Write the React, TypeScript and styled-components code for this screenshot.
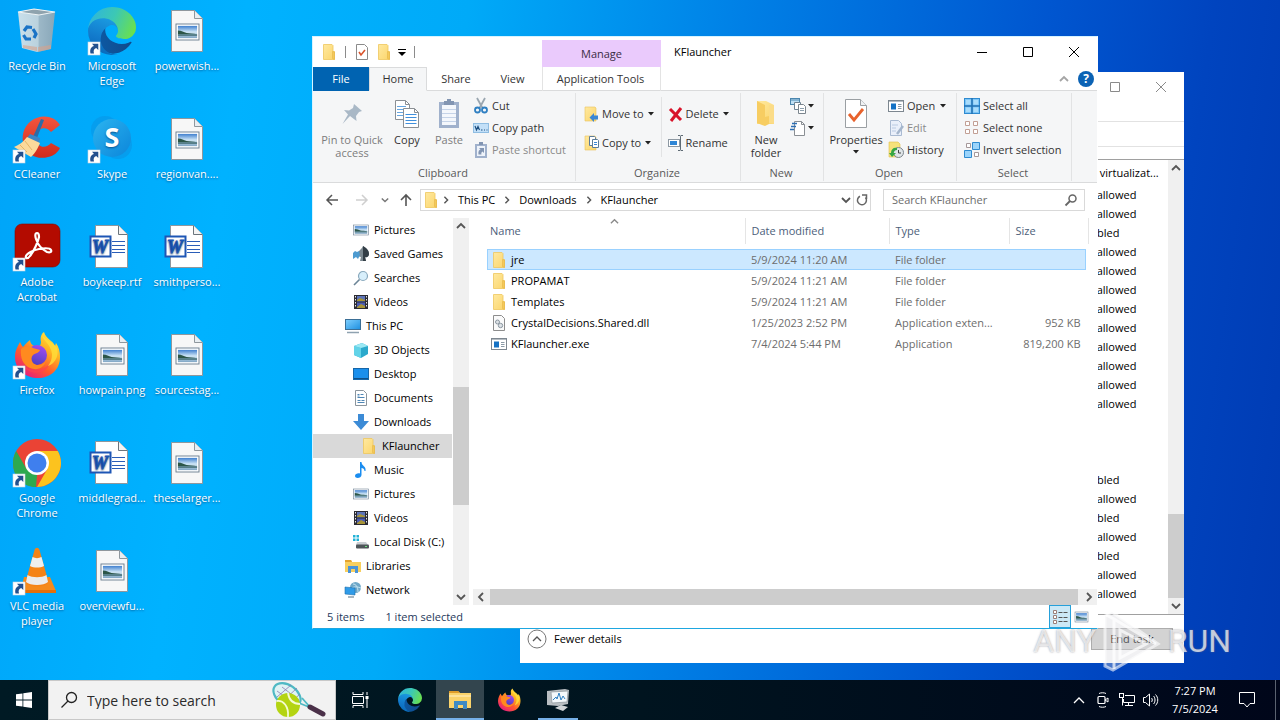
import React from 'react';
import styled, { createGlobalStyle } from 'styled-components';

const FONT = '"Open Sans", "Noto Sans", "Liberation Sans", sans-serif';

const GlobalStyle = createGlobalStyle`
  * { box-sizing: border-box; }
  html, body, #root { height: 100%; }
  body { margin: 0; overflow: hidden; font: 11px/16px ${FONT}; color: #000; }
  button, input { font: inherit; color: inherit; margin: 0; padding: 0; border: 0; background: none; }
  button { white-space: nowrap; }
  svg { display: block; flex: none; overflow: visible; }
  ul { list-style: none; margin: 0; padding: 0; }
  table { border-collapse: collapse; border-spacing: 0; table-layout: fixed; }
  th, td { padding: 0; text-align: left; font-weight: 400; white-space: nowrap; }
`;

/* ---------- icons ---------- */

const Svg = ({ s = 16, w, h, vb, children }: { s?: number; w?: number; h?: number; vb?: string; children: React.ReactNode }) => (
  <svg width={w ?? s} height={h ?? s} viewBox={vb ?? `0 0 ${w ?? s} ${h ?? s}`} fill="none" aria-hidden="true">
    {children}
  </svg>
);

const Defs = styled.svg`
  position: absolute;
  width: 0;
  height: 0;
`;

const Gradients = () => (
  <Defs aria-hidden="true">
    <defs>
      <linearGradient id="edgeA" x1="0" y1="0" x2="1" y2="0"><stop offset="0" stopColor="#0c59a4" /><stop offset="1" stopColor="#114a8b" /></linearGradient>
      <linearGradient id="edgeB" x1="0.6" y1="0" x2="0.3" y2="1"><stop offset="0" stopColor="#1b9de2" /><stop offset="0.6" stopColor="#1279cb" /><stop offset="1" stopColor="#0668b8" /></linearGradient>
      <linearGradient id="edgeC" x1="0" y1="0.3" x2="1" y2="0.6"><stop offset="0" stopColor="#2fb5dc" /><stop offset="0.5" stopColor="#3cc8b4" /><stop offset="1" stopColor="#6ae04e" /></linearGradient>
      <linearGradient id="fox" x1="0.9" y1="0" x2="0.2" y2="1"><stop offset="0" stopColor="#fff44f" /><stop offset="0.35" stopColor="#ffb021" /><stop offset="0.65" stopColor="#ff5a2c" /><stop offset="1" stopColor="#e2158b" /></linearGradient>
      <linearGradient id="foxCore" x1="0.7" y1="0" x2="0.3" y2="1"><stop offset="0" stopColor="#a24bf0" /><stop offset="1" stopColor="#4a3fc0" /></linearGradient>
      <linearGradient id="skype" x1="0" y1="0" x2="1" y2="1"><stop offset="0" stopColor="#2bb4f0" /><stop offset="1" stopColor="#0c86da" /></linearGradient>
      <linearGradient id="sky" x1="0" y1="0" x2="0" y2="1"><stop offset="0" stopColor="#3f7fcf" /><stop offset="0.5" stopColor="#cfe6f6" /><stop offset="1" stopColor="#7fa5c4" /></linearGradient>
      <linearGradient id="bin" x1="0" y1="0" x2="1" y2="0"><stop offset="0" stopColor="#dfe6ea" /><stop offset="0.55" stopColor="#cfd6da" /><stop offset="0.56" stopColor="#aebac2" /><stop offset="1" stopColor="#98a7b1" /></linearGradient>
      <linearGradient id="ccl" x1="0" y1="0" x2="0" y2="1"><stop offset="0" stopColor="#f4553e" /><stop offset="1" stopColor="#cf2a1c" /></linearGradient>
      <linearGradient id="folderG" x1="0" y1="0" x2="1" y2="1"><stop offset="0" stopColor="#ffe9a0" /><stop offset="1" stopColor="#fbd56b" /></linearGradient>
      <linearGradient id="screen" x1="0" y1="0" x2="1" y2="1"><stop offset="0" stopColor="#7fd0ff" /><stop offset="1" stopColor="#1d8fe0" /></linearGradient>
    </defs>
  </Defs>
);

const Shortcut = () => (
  <g>
    <rect x="0" y="35" width="12" height="13" fill="#fff" stroke="#c5d5e5" strokeWidth="0.6" />
    <path d="M2.500 46.500c-1-4.500 1-7 3.500-7.500l-2-2.200h6.300v6.300L8.200 41c-2 .5-3.200 2.500-2.200 5.500z" fill="#23508e" />
  </g>
);

const EdgePaths = () => (
  <g>
    <path d="M226.400 185.500a93.700 93.700 0 0 1-10.500 4.700 101.900 101.900 0 0 1-35.900 6.500c-47.300 0-88.500-32.500-88.500-74.300a31.500 31.500 0 0 1 16.400-27.300c-42.800 1.800-53.800 46.400-53.800 72.500 0 73.900 68.100 81.400 82.800 81.400 7.900 0 19.800-2.300 27-4.600l1.300-.4a128.300 128.300 0 0 0 66.600-52.800 4 4 0 0 0-5.400-5.700z" fill="url(#edgeA)" />
    <path d="M105.700 241.400a79.200 79.200 0 0 1-22.700-21.300 80.700 80.700 0 0 1 29.500-120c3.200-1.500 8.500-4.100 15.600-4a32.400 32.400 0 0 1 25.700 13 31.900 31.900 0 0 1 6.300 18.700c0-.2 24.500-79.600-80-79.600-43.900 0-80 41.600-80 78.200a130.200 130.200 0 0 0 12.100 56 128 128 0 0 0 156.400 67 75.500 75.500 0 0 1-62.800-8z" fill="url(#edgeB)" />
    <path d="M152.300 148.900c-.8 1-3.300 2.500-3.300 5.700 0 2.600 1.700 5.100 4.700 7.200 14.400 10 41.500 8.700 41.600 8.700 10.700 0 21.100-2.900 30.300-8.300a61.400 61.400 0 0 0 30.400-52.900c.3-22.400-8-37.300-11.300-43.900C223.500 23.900 177.700 0 128 0A128 128 0 0 0 0 126.200c.5-36.500 36.800-66 80-66 3.500 0 23.500.3 42 10 16.300 8.600 24.900 18.900 30.800 29.200 6.200 10.700 7.300 24.100 7.300 29.500s-2.700 13.300-7.800 20z" fill="url(#edgeC)" />
  </g>
);

const FoxPaths = () => (
  <g>
    <path d="M2 26C2 19 5 15 7 11c1 2 2 4 3 5 2-2 4-5 7-7 0 3 2 5 4 6l4 1c2-1 3-3 3-5-1-4 0-8 3-10 1 4 4 6 7 9 2 1 3 3 4 5l1-3c3 4 4 9 4 14 0 13-10 21-22 21S2 39 2 26z" fill="url(#fox)" />
    <circle cx="24" cy="24" r="10" fill="url(#foxCore)" />
    <path d="M8 18c4-3 9-3 12-1 2 1 5 1 7 2-1 3-4 3-7 5-2 2-2 5 0 8 3 3 9 3 13-2-2 7-9 10-16 7S7 27 8 18z" fill="#ff8a1f" />
    <path d="M10 34c6 7 20 8 27-2-3 11-21 14-27 2z" fill="#ff4152" opacity=".7" />
    <path d="M29 4c1 6 9 9 10 19 0 6-2 9-4 12 8-3 11-11 9-18-3-5-11-8-15-13z" fill="#ffdf3a" opacity=".8" />
  </g>
);

const Photo = ({ x, y, w, h }: { x: number; y: number; w: number; h: number }) => (
  <g transform={`translate(${x} ${y}) scale(${w / 24} ${h / 17})`}>
    <rect width="24" height="17" fill="#fff" stroke="#6d7f91" strokeWidth="1" />
    <rect x="2" y="2" width="20" height="13" fill="url(#sky)" />
    <path d="M2 7c4 0 6 2 9 2.500s7 .5 11 1.500H2z" fill="#2c5648" />
    <path d="M2 11h20v1.500H2z" fill="#3e6a70" />
  </g>
);

const Page = () => <path d="M8.500 3.500h23l8 8v33h-31z" fill="#f7f7f7" stroke="#8f979d" />;

const deskIcons: Record<string, React.ReactNode> = {
  bin: (
    <g>
      <path d="M5 5l16-3 21 3-4 37-14 3-15-4z" fill="url(#bin)" opacity=".9" />
      <path d="M5 5l16-3 21 3-16 3z" fill="#8fa3ae" stroke="#eef3f5" strokeWidth="1.200" />
      <path d="M10 38l14 2v4l-14-3zM25 40l13-2v4l-13 3z" fill="#d9a28a" opacity=".6" />
      <g stroke="#1a73c6" strokeWidth="3.200"><path d="M11 24l3-4 5 .5" /><path d="M20 22l3 5-2 4" /><path d="M18 32h-5l-2.500-4" /></g>
    </g>
  ),
  edge: <g><g transform="scale(.1875)"><EdgePaths /></g><Shortcut /></g>,
  ccleaner: (
    <g>
      <path d="M47 10C41 0 27-1 18 6 10 12 8 22 11 31c3 9 14 14 24 11 6-1 10-5 12-9l-9-5c-3 4-9 5-12 2-4-4-4-11 0-15 4-3 9-2 12 2z" fill="url(#ccl)" />
      <path d="M28 4l3 1-7 18-4-1z" fill="#2c6ca8" /><path d="M17 19l10 4-1 5-12-5z" fill="#3d86c6" />
      <path d="M14 22l13 6c-2 5-4 9-9 14L1 32c5-2 9-5 13-10z" fill="#fbd99b" /><path d="M7 30l7 7m-2-11l7 9" stroke="#e5b468" />
      <Shortcut />
    </g>
  ),
  skype: (
    <g>
      <circle cx="17" cy="15" r="14" fill="#0a94e4" opacity=".55" /><circle cx="30" cy="30" r="14" fill="#0c8fe0" opacity=".5" />
      <circle cx="24" cy="23" r="19" fill="url(#skype)" />
      <text x="24" y="32" textAnchor="middle" fontFamily="Open Sans" fontWeight="700" fontSize="27" fill="#fff">S</text><Shortcut />
    </g>
  ),
  acrobat: (
    <g>
      <rect x="2" y="1" width="45" height="43" rx="7" fill="#b30b00" stroke="#850800" strokeWidth=".6" />
      <path d="M24 10c-2 0-2 3-1 6 2 6 7 11 11 13 3 1 5 0 4-2-1-2-6-2-12-1-5 1-12 4-13 7-1 3 2 3 4 0 4-5 8-14 9-19 0-3-1-4-2-4z" stroke="#fff" strokeWidth="2.200" />
      <Shortcut />
    </g>
  ),
  firefox: <g><FoxPaths /><Shortcut /></g>,
  chrome: (
    <g>
      <circle cx="24" cy="24" r="24" fill="#ea4335" />
      <path d="M3.200 12L13.600 30 24 36l-1 12C10 48 0 38 0 24c0-4 1-8 3.200-12z" fill="#2da94f" />
      <path d="M24 12h20.800C46.500 15 48 19 48 24c0 13-11 24-24 24l10.400-18z" fill="#fcc31e" />
      <circle cx="24" cy="24" r="12" fill="#fff" /><circle cx="24" cy="24" r="9.500" fill="#3f7fee" />
      <Shortcut />
    </g>
  ),
  vlc: (
    <g>
      <path d="M11 30h26l6 14-4 2H6l2-3z" fill="#f58a1c" /><path d="M8 43h35v3H6z" fill="#e26f0a" />
      <path d="M21.500 3c1-3 4-3 5 0l9 32c-3 6-20 6-23 0z" fill="#f58316" />
      <path d="M19.500 10c3 1.500 6 1.500 9 0l2.500 9c-4 2-10 2-14 0z" fill="#efefef" /><path d="M14.500 28c5 3 14 3 19 0l1.500 7c-4 4-18 4-22 0z" fill="#ececec" />
      <Shortcut />
    </g>
  ),
  image: <g><Page /><path d="M31.500 3.500v8h8" fill="#e8eef2" stroke="#8f979d" /><Photo x={13} y={17} w={23} h={16} /></g>,
  word: (
    <g>
      <path d="M7.500 2.500h23l9 9v33h-32z" fill="#fff" stroke="#8f979d" /><path d="M30.500 2.500v9h9" fill="#f4f4f4" stroke="#6c757c" />
      <path d="M24 18.500h13M24 22.500h13M24 26.500h13M24 29.500h13" stroke="#2a5db8" strokeWidth="1.200" />
      <rect x="2.500" y="13.500" width="20" height="20" fill="#fff" stroke="#1e56b5" strokeWidth="2" />
      <text x="12" y="30" textAnchor="middle" fontFamily="Liberation Serif" fontWeight="700" fontStyle="italic" fontSize="18" fill="#1e56b5" stroke="#1e56b5" strokeWidth=".8">W</text>
    </g>
  ),
};

const Folder = () => (
  <Svg><path d="M2.500.5h8.500l1 1v6h1.500v8h-11z" fill="url(#folderG)" stroke="#efc65d" strokeWidth=".8" /><path d="M11.500 7.500l2 .5v7.500l-2-1z" fill="#f4c95a" stroke="#e3b040" strokeWidth=".5" /></Svg>
);
const FolderTall = () => (
  <Svg w={20} h={28}><path d="M1 1h9l8 4v19H1z" fill="url(#folderG)" /><path d="M1 1l8 4v21l-8-3zM9 17l4-1v8l-4 2z" fill="#f7cd62" /><path d="M13 5h5v19l-5-1z" fill="#fbdc88" /></Svg>
);
const PageCheck = () => (
  <Svg><path d="M2.500.5h8l3 3v12h-11z" fill="#fff" stroke="#8b8b8b" /><path d="M5 8l2 3 4-5" stroke="#d9532c" strokeWidth="1.600" /></Svg>
);
const PictureIcon = () => <Svg><Photo x={0.5} y={3} w={15} h={10} /></Svg>;
const VideoIcon = () => (
  <Svg><rect x="1" y="1" width="14" height="14" fill="#2b2b33" /><rect x="4" y="2" width="8" height="5.500" fill="#5d74b8" /><rect x="4" y="8.500" width="8" height="5.500" fill="#4a5bb4" /><path d="M4 6l3-2 5 2v1H4zM4 13l4-3 4 2v2H4z" fill="#a89538" /><path d="M2.500 2v12M13.500 2v12" stroke="#e6e6e6" strokeDasharray="1.500 1.500" /></Svg>
);
const GamesIcon = () => (
  <Svg><path d="M10 0c3 2 6 4 6 8 0 2-2 4-4 3l1 4H7l1-4c-2 0-3-1-3-4 1-3 4-4 5-7z" fill="#7b8890" /><path d="M10 0c3 2 6 4 6 8 0 2-2 4-4 3l1 4h-3z" fill="#333e46" /><path d="M0 7l2-2 2 1 2-1 1 4-2 4-2-2-3 2z" fill="#4e9bd0" /></Svg>
);
const SearchesIcon = () => <Svg><circle cx="10" cy="6" r="4.500" fill="#d8effb" stroke="#8aa9bd" strokeWidth="1.200" /><path d="M6.500 9.500L1 15" stroke="#6b8496" strokeWidth="1.600" /></Svg>;
const PcIcon = () => <Svg><rect x=".5" y="1.500" width="15" height="10" fill="url(#screen)" stroke="#3b6f96" /><path d="M2 14.500h12" stroke="#8fa2b0" strokeWidth="1.500" /></Svg>;
const CubeIcon = () => <Svg><path d="M1 4l8-3 6 3v8l-7 4-7-3z" fill="#2aa9cc" /><path d="M1 4l7 2v10l-7-3z" fill="#62d3e8" /><path d="M1 4l8-3 6 3-7 2z" fill="#9be9f4" /></Svg>;
const DesktopIconSm = () => <Svg><rect x=".5" y="2.500" width="15" height="11" fill="#1a8fec" stroke="#1666a8" /><path d="M1 12.500h14" stroke="#0f4f86" /></Svg>;
const DocIcon = () => <Svg><path d="M2.500.5h8l3 3v12h-11z" fill="#fff" stroke="#8b959d" /><path d="M4.500 4.500h2m1 0h3M4.500 7.500h7m-7 3h3m1 0h3m-7 2h7M4.500 6h2" stroke="#4f86b5" /></Svg>;
const DownIcon = () => <Svg><path d="M5 0h6v7h5l-8 9-8-9h5z" fill="#3c8bd6" /></Svg>;
const MusicIcon = () => <Svg><path d="M7 0h1.500c0 4 5 4 4 9h-1c0-2-1.500-3-3-3v7c0 3.500-6.500 4-6.500 1 0-2 2.500-3 5-2.500z" fill="#1a8df0" /></Svg>;
const DiskIcon = () => <Svg><path d="M0 1h2.500v2.500H0zM3.500 1H6v2.500H3.500zM0 4.500h2.500V7H0zM3.500 4.500H6V7H3.500z" fill="#22b2d6" /><path d="M4 8h9l2 3H3z" fill="#c9ced2" /><rect x="3" y="10.500" width="13" height="4" rx="1" fill="#4e5559" /><path d="M12 12.500h2" stroke="#6be07b" /></Svg>;
const LibIcon = () => <Svg><path d="M0 2h6l1 2h9v10H0z" fill="#f8cf5e" /><path d="M0 2h6l1 2H0z" fill="#e4a32e" /><path d="M3 8h10v7h-3v-4H6v4H3z" fill="#4a94d8" /></Svg>;
const NetIcon = () => <Svg><circle cx="10.500" cy="5.500" r="5.500" fill="#6fa8c8" /><path d="M8 2c3 0 5 3 5 8M7 6c3-2 6-1 9 0" stroke="#c7e6f4" /><path d="M0 5l10 1v7L0 12z" fill="#2f9be8" stroke="#2071ad" strokeWidth=".6" /><path d="M3 15h6" stroke="#7990a0" strokeWidth="1.300" /></Svg>;
const DllIcon = () => <Svg><path d="M2.500.5h8l3 3v12h-11z" fill="#fafafa" stroke="#8d8d8d" /><circle cx="6.500" cy="7" r="2" fill="#dde2e6" stroke="#8a96a0" /><circle cx="9.500" cy="10.500" r="2.200" fill="#dde2e6" stroke="#8a96a0" /></Svg>;
const ExeIcon = () => <Svg><rect x=".5" y="2.500" width="15" height="11" fill="#fff" stroke="#7d8790" /><path d="M1 3.500h14" stroke="#b5bcc2" /><rect x="3" y="5.500" width="5" height="6" fill="#1572c4" /><path d="M10 6.500h3.500M10 8.500h3.500M10 10.500h3.500" stroke="#8b9aa6" /></Svg>;

const PinIcon = () => <Svg s={22}><path d="M13 1l8 7-3 1-3 4 .5 5L9 13 1.500 21 7 11.500 3 7l5 .5L12 5z" fill="#a9b8c6" /></Svg>;
const CopyIcon = () => (
  <Svg w={26} h={30}>
    <path d="M1.500 1.500h10l4 4v15h-14z" fill="#fff" stroke="#8a8f94" /><path d="M11.500 1.500v4h4" stroke="#8a8f94" /><path d="M3 7.500h9M3 10.500h8M3 13.500h8M3 16.500h8" stroke="#66a5e0" />
    <path d="M9.500 9.500h11l4 4v15h-15z" fill="#fff" stroke="#8a8f94" /><path d="M20.500 9.500v4h4" stroke="#8a8f94" /><path d="M11.500 15.500h11M11.500 18.500h11M11.500 21.500h11M11.500 24.500h11" stroke="#3f8fdc" />
  </Svg>
);
const PasteIcon = () => (
  <Svg w={22} h={30}><rect x="1" y="3" width="20" height="26" fill="#a0b1cc" /><rect x="4" y="6" width="14" height="20" fill="#f4f7fc" /><path d="M4 10.500h14M4 14.500h14M4 18.500h14M4 22.500h14" stroke="#c5d3e8" /><rect x="6" y="2" width="10" height="4" fill="#8295b2" /><rect x="9" y="0" width="4" height="3" fill="#8295b2" /></Svg>
);
const CutIcon = () => <Svg><path d="M4 0l5.500 10M12 0L6.500 10" stroke="#9aa6b0" strokeWidth="1.800" /><circle cx="4.500" cy="12" r="2.500" stroke="#2f7fc2" strokeWidth="1.800" /><circle cx="11.500" cy="12" r="2.500" stroke="#2f7fc2" strokeWidth="1.800" /></Svg>;
const PathIcon = () => <Svg><rect x=".5" y="3.500" width="15" height="9" fill="#c3e0f8" stroke="#8fbde2" /><path d="M2 6l1.500 4L5 6.500 6.500 10M8 10h1.500M11 10h1M13.500 10h1" stroke="#1c4f80" strokeWidth="1.200" /></Svg>;
const PasteShortcutIcon = () => <Svg><path d="M2 2h12v14H2z" fill="#a0b1cc" /><path d="M4 4h8v10H4z" fill="#eef3fa" /><path d="M6 0h4v3H6z" fill="#8295b2" /><path d="M5.500 12.500c-.5-3 .5-4.500 2-5L6 6h5v5L9.500 9.500c-1 .5-1.500 1.500-1 3z" fill="#8295b2" /></Svg>;
const MoveIcon = () => <Svg><path d="M1 1h10l1 1v13H1z" fill="url(#folderG)" stroke="#eac35a" strokeWidth=".6" /><path d="M14 9.500h-4V7l-4.500 4.500L10 16v-2.500h4z" fill="#3a86d4" /></Svg>;
const CopyToIcon = () => <Svg><path d="M1 1h10l1 1v13H1z" fill="url(#folderG)" stroke="#eac35a" strokeWidth=".6" /><path d="M5.500 1.500h5l1 1v8h-6z" fill="#fff" stroke="#5d7c98" /><path d="M8.500 4.500h5l1 1v7h-6z" fill="#fff" stroke="#5d7c98" /><path d="M10 7.500h3M10 9.500h3" stroke="#3a86d4" /></Svg>;
const DeleteIcon = () => <Svg><path d="M2 3l11 11M13 2L3 15" stroke="#d8142b" strokeWidth="3" /></Svg>;
const RenameIcon = () => <Svg><rect x=".5" y="4.500" width="11" height="7" fill="#fff" stroke="#8d98a2" /><rect x="2" y="6" width="7" height="4" fill="#2f86d6" /><path d="M12.500 1.500v13M10 .5h2l.5 1 .5-1h2M10 15.500h2l.5-1 .5 1h2" stroke="#5f6b75" /></Svg>;
const NewItemIcon = () => <Svg><rect x=".5" y=".5" width="9" height="6" fill="#bfe0f5" stroke="#4a86ae" /><path d="M1 2h8" stroke="#4a86ae" /><path d="M4.500 4.500h6v7h-6z" fill="#fff" stroke="#6f8494" /><path d="M8.500 6.500h5l2 2v7h-7z" fill="#fff" stroke="#7b858d" /><path d="M10 10.500h4M10 12.500h4" stroke="#8da0ae" /></Svg>;
const EasyIcon = () => <Svg><path d="M4.500 1.500h7l3 3v11h-10z" fill="#fff" stroke="#8a8f94" /><path d="M11.500 1.500v3h3" stroke="#8a8f94" /><path d="M2 3.500h5M1 6.500h5M0 9.500h4" stroke="#2d6fb4" strokeWidth="1.400" /></Svg>;
const PropertiesIcon = () => <Svg w={22} h={29}><path d="M.5.500h15l6 6v22H.5z" fill="#fff" stroke="#9a9fa3" /><path d="M15.500.500v6h6" fill="#eef1f3" stroke="#9a9fa3" /><path d="M4 15l5 6 9-11" stroke="#e8622c" strokeWidth="2.800" /></Svg>;
const EditIcon = () => <Svg><path d="M2.500.5h8l3 3v12h-11z" fill="#e9effa" stroke="#a9bad2" /><path d="M4 5h6M4 8h4M4 11h4" stroke="#b9cae2" /><path d="M15 6l-6 8" stroke="#a5b6cc" strokeWidth="2.500" /></Svg>;
const HistoryIcon = () => <Svg><path d="M1 0h9l2 2v13H1z" fill="#f6e27b" stroke="#e0c04a" strokeWidth=".6" /><circle cx="10.500" cy="10.500" r="5" fill="#dfe5e8" stroke="#7b858d" /><path d="M10.500 8v3H13" stroke="#444" /><path d="M3 11c0-4 3-6 6-5v2c-2 0-3 1-3.500 3H8l-4 4-3-4z" fill="#35a743" /></Svg>;
const SelAll = () => <Svg><rect x=".5" y=".5" width="15" height="15" fill="#7cc5f7" stroke="#2f8bd0" /><path d="M8 0v16M0 8h16" stroke="#2272b5" strokeWidth="1.600" /><path d="M2 2h4.500v4.500H2zM9.500 2H14v4.500H9.500zM2 9.500h4.500V14H2zM9.500 9.500H14V14H9.500z" fill="#a9dcfb" /></Svg>;
const SelNone = () => <Svg><path d="M1.500 1.500h4v4h-4zM9.500 1.500h4v4h-4zM1.500 9.500h4v4h-4zM9.500 9.500h4v4h-4z" fill="#fff" stroke="#c29f94" /></Svg>;
const SelInv = () => <Svg><path d="M2.500 1.500h4v4h-4zM10.500 10.500h4v4h-4z" fill="#fff" stroke="#a5989a" /><path d="M8.500.5h7v7h-7zM.5 8.500h7v7h-7z" fill="#9bd4fb" stroke="#2f8bd0" /></Svg>;

const Chev = ({ d = 'down', c = '#555', s = 10, t = 1.8 }: { d?: 'down' | 'up' | 'left' | 'right'; c?: string; s?: number; t?: number }) => {
  const paths = { down: 'M1 3l4 4 4-4', up: 'M1 7l4-4 4 4', left: 'M7 1L3 5l4 4', right: 'M3 1l4 4-4 4' };
  return <Svg s={s} vb="0 0 10 10"><path d={paths[d]} stroke={c} strokeWidth={t} /></Svg>;
};
const CaretBox = styled.i`
  margin-left: 2px;
`;
const Tri = () => <CaretBox><Svg w={6} h={4}><path d="M0 0h6L3 3.500z" fill="#222" /></Svg></CaretBox>;

/* ---------- desktop ---------- */

const Screen = styled.div`
  position: relative;
  display: flex;
  flex-direction: column;
  height: 100%;
  min-height: 720px;
  overflow: hidden;
  background: linear-gradient(98deg, #00a4f8 0%, #00b2ff 18%, #00aaf8 34%, #0080e6 54%, #0056d0 76%, #0044bf 88%, #003ab2 100%);
`;

const Desktop = styled.main`
  flex: 1;
  display: flex;
  align-items: flex-start;
  padding-top: 7px;
`;

const IconGrid = styled.div`
  display: grid;
  grid-auto-flow: column;
  grid-template-rows: repeat(6, 108px);
  grid-auto-columns: 75px;
`;

const Launcher = styled.button`
  display: flex;
  flex-direction: column;
  align-items: center;
  gap: 3px;
  padding-right: 1px;
  color: #fff;
  line-height: 15px;
  text-shadow: 0 1px 2px rgba(0, 40, 90, 0.6);
  span { white-space: pre-line; }
`;

const launchers: [string, string][] = [
  ['bin', 'Recycle Bin'], ['ccleaner', 'CCleaner'], ['acrobat', 'Adobe\nAcrobat'], ['firefox', 'Firefox'], ['chrome', 'Google\nChrome'], ['vlc', 'VLC media\nplayer'],
  ['edge', 'Microsoft\nEdge'], ['skype', 'Skype'], ['word', 'boykeep.rtf'], ['image', 'howpain.png'], ['word', 'middlegrad...'], ['image', 'overviewfu...'],
  ['image', 'powerwish...'], ['image', 'regionvan....'], ['word', 'smithperso...'], ['image', 'sourcestag...'], ['image', 'theselarger...'],
];

/* ---------- shared window parts ---------- */

const Row = styled.div<{ $gap?: number }>`
  display: flex;
  align-items: center;
  gap: ${(p) => p.$gap ?? 0}px;
`;
const Spacer = styled.div`flex: 1;`;

const CaptionButton = styled.button`
  width: 46px;
  height: 30px;
  display: flex;
  align-items: center;
  justify-content: center;
`;
const MinGlyph = () => <Svg s={10}><path d="M0 5.500h10" stroke="#000" /></Svg>;
const MaxGlyph = ({ c = '#000' }) => <Svg s={10}><path d="M.5.500h9v9h-9z" stroke={c} /></Svg>;
const CloseGlyph = ({ c = '#000' }) => <Svg s={10}><path d="M0 0l10 10M10 0L0 10" stroke={c} /></Svg>;

const VScroll = styled.div`
  width: 16px;
  display: flex;
  flex-direction: column;
  align-items: center;
  background: #f0f0f0;
`;
const ScrollBtn = styled.button`
  width: 16px;
  height: 16px;
  flex: none;
  display: flex;
  align-items: center;
  justify-content: center;
`;
const Track = styled.div<{ $before: number; $after: number; $thumb: number }>`
  flex: 1;
  align-self: stretch;
  display: grid;
  grid-template-rows: ${(p) => p.$before}fr ${(p) => p.$thumb}fr ${(p) => p.$after}fr;
  &::after { content: ''; grid-row: 2; background: #cdcdcd; }
`;

/* ---------- task manager ---------- */

const TaskWindow = styled.section`
  position: absolute;
  left: 520px;
  top: 72px;
  width: 664px;
  height: 591px;
  display: flex;
  flex-direction: column;
  background: #fff;
`;
const TaskTitle = styled.header`
  display: flex;
  justify-content: flex-end;
  height: 29px;
`;
const TaskStrip = styled.div<{ $h: number }>`
  height: ${(p) => p.$h}px;
  border-bottom: 1px solid #e2e2e2;
`;
const TaskBody = styled.div`
  flex: 1;
  min-height: 0;
  display: flex;
  justify-content: flex-end;
  margin-top: 12px;
  border-top: 1px solid #a0a0a0;
  border-bottom: 1px solid #a0a0a0;
`;
const TaskTable = styled.table`
  width: 93px;
  align-self: flex-start;
  th { height: 25px; }
  td { height: 19px; }
`;
const TaskFooter = styled.footer`
  display: flex;
  align-items: center;
  gap: 7px;
  height: 48px;
  padding: 0 11px 0 7px;
`;
const EndTask = styled.button`
  width: 82px;
  height: 22px;
  border: 1px solid #adadad;
  background: #d3d3d3;
`;

const uac = ['a', 'a', 'd', 'a', 'a', 'a', 'a', 'a', 'a', 'a', 'a', 'a', '', '', '', 'd', 'a', 'd', 'a', 'd', 'a', 'a'];
const uacText: Record<string, string> = { a: 'Not allowed', d: 'Disabled', '': '' };

const TaskManager = () => (
  <TaskWindow aria-label="Task Manager">
    <TaskTitle>
      <CaptionButton aria-label="Maximize"><MaxGlyph c="#8a8a8a" /></CaptionButton>
      <CaptionButton aria-label="Close"><CloseGlyph c="#8a8a8a" /></CaptionButton>
    </TaskTitle>
    <TaskStrip $h={21} />
    <TaskStrip $h={25} />
    <TaskBody>
      <TaskTable>
        <thead><tr><th>UAC virtualizat...</th></tr></thead>
        <tbody>{uac.map((k, i) => <tr key={i}><td>{uacText[k]}</td></tr>)}</tbody>
      </TaskTable>
      <VScroll>
        <ScrollBtn aria-label="Scroll up"><Chev d="up" /></ScrollBtn>
        <Track $before={337} $thumb={84} $after={0} />
        <ScrollBtn aria-label="Scroll down"><Chev /></ScrollBtn>
      </VScroll>
    </TaskBody>
    <TaskFooter>
      <Svg s={20}><circle cx="10" cy="10" r="9" stroke="#777" /><path d="M6 12l4-4 4 4" stroke="#555" strokeWidth="1.300" /></Svg>
      <span>Fewer details</span>
      <Spacer />
      <EndTask>End task</EndTask>
    </TaskFooter>
  </TaskWindow>
);

/* ---------- explorer ---------- */

const ExplorerWindow = styled.section`
  position: absolute;
  left: 312px;
  top: 36px;
  width: 786px;
  height: 593px;
  display: flex;
  flex-direction: column;
  background: #fff;
  border: 1px solid #d6f3ff;
  border-right-color: #fff;
  border-bottom-color: #1ea7e0;
`;
const TitleBar = styled.header`
  display: flex;
  height: 30px;
`;
const QuickAccess = styled.div`
  display: flex;
  align-items: center;
  gap: 6px;
  width: 229px;
  padding-left: 8px;
`;
const Divider = styled.i`
  width: 1px;
  height: 12px;
  margin: 0 2px;
  background: #8b8b8b;
`;
const ManageTab = styled.div`
  width: 119px;
  margin-top: 3px;
  line-height: 28px;
  text-align: center;
  background: #eacafc;
  color: #3a2c44;
`;
const WindowTitle = styled.h1`
  flex: 1;
  margin: 0;
  padding-left: 13px;
  font-size: 11px;
  font-weight: 400;
  line-height: 30px;
`;
const Tabs = styled.nav`
  display: flex;
  align-items: center;
  height: 24px;
  padding-right: 3px;
  border-bottom: 1px solid #dadbdc;
`;
const Tab = styled.button<{ $w: number; $kind?: 'file' | 'active' | 'tool' }>`
  width: ${(p) => p.$w}px;
  height: 24px;
  color: #333;
  ${(p) => p.$kind === 'file' && 'background: #0063b1; color: #fff;'}
  ${(p) => p.$kind === 'active' && 'background: #f5f6f7; border: 1px solid #dadbdc; border-bottom-color: #f5f6f7;'}
  ${(p) => p.$kind === 'tool' && 'margin-left: 2px; padding-right: 2px; border: solid #e3e3e3; border-width: 0 1px;'}
`;
const Ribbon = styled.div`
  display: flex;
  height: 92px;
  padding: 2px 0 1px;
  background: #f5f6f7;
  border-bottom: 1px solid #dadbdc;
`;
const Group = styled.div<{ $w: number }>`
  width: ${(p) => p.$w}px;
  display: flex;
  flex-direction: column;
  border-right: 1px solid #e2e3e4;
`;
const GroupBody = styled.div<{ $pad?: number }>`
  flex: 1;
  display: flex;
  align-items: flex-start;
  padding-left: ${(p) => p.$pad ?? 6}px;
`;
const GroupName = styled.div`
  padding-right: 2px;
  line-height: 17px;
  text-align: center;
  color: #5a5a5a;
`;
const BigButton = styled.button<{ $w: number; $off?: boolean }>`
  width: ${(p) => p.$w}px;
  display: flex;
  flex-direction: column;
  align-items: center;
  color: ${(p) => (p.$off ? '#7c7c7c' : '#333')};
  line-height: 13px;
  padding-top: 4px;
  span { white-space: pre-line; }
  ${CaretBox} { margin: 4px 0 0; }
`;
const BigIcon = styled.div`
  height: 36px;
  display: flex;
  align-items: center;
  padding-bottom: 3px;
`;
const Stack = styled.div<{ $row?: number; $ml?: number; $mt?: number }>`
  display: grid;
  grid-auto-rows: ${(p) => p.$row ?? 22}px;
  margin-left: ${(p) => p.$ml ?? 0}px;
  margin-top: ${(p) => p.$mt ?? 2}px;
`;
const SmallButton = styled.button<{ $off?: boolean; $gap?: number }>`
  display: flex;
  align-items: center;
  gap: ${(p) => p.$gap ?? 3}px;
  color: ${(p) => (p.$off ? '#8a8a8a' : '#333')};
`;
const InnerLine = styled.i`
  width: 1px;
  height: 60px;
  margin: 4px 6px 0 7px;
  background: #e2e3e4;
`;

const NavBar = styled.div`
  display: flex;
  align-items: center;
  height: 35px;
  padding: 0 12px 2px 5px;
`;
const NavButton = styled.button<{ $w: number }>`
  width: ${(p) => p.$w}px;
  height: 22px;
  display: flex;
  align-items: center;
  justify-content: center;
`;
const Address = styled.div`
  flex: 1;
  display: flex;
  align-items: center;
  height: 22px;
  padding-left: 2px;
  border: 1px solid #d9d9d9;
`;
const Crumb = styled.button`
  padding: 0 5px;
`;
const Refresh = styled.button`
  width: 17px;
  height: 20px;
  display: flex;
  align-items: center;
  justify-content: center;
  border-left: 1px solid #d9d9d9;
`;
const SearchBox = styled.label`
  width: 202px;
  height: 22px;
  display: flex;
  align-items: center;
  margin-left: 12px;
  padding: 0 7px 0 8px;
  border: 1px solid #d9d9d9;
  input { flex: 1; min-width: 0; outline: 0; background: none; }
  input::placeholder { color: #6d6d6d; opacity: 1; }
`;

const Body = styled.div`
  flex: 1;
  min-height: 0;
  display: flex;
`;
const Tree = styled.ul`
  width: 139px;
  margin-right: 1px;
`;
const TreeItem = styled.li<{ $level: number; $on?: boolean }>`
  display: flex;
  align-items: center;
  gap: 5px;
  height: 24px;
  padding-left: ${(p) => 24 + p.$level * 8}px;
  white-space: nowrap;
  background: ${(p) => (p.$on ? '#d9d9d9' : 'none')};
`;
const Content = styled.div`
  flex: 1;
  min-width: 0;
  display: flex;
  flex-direction: column;
  padding-left: 4px;
`;
const ListArea = styled.div`
  flex: 1;
  padding-left: 14px;
`;
const SortMark = styled.div`
  position: absolute;
  left: 297px;
  top: 180px;
`;
const FileTable = styled.table`
  width: 602px;
  color: #6d6d6d;
  th { height: 26px; padding-left: 6px; color: #4c607a; border-right: 1px solid #e5e5e5; }
  th:first-child { padding-left: 3px; }
  td { height: 21px; padding-left: 6px; }
  td:first-child { padding-left: 4px; color: #000; }
  td:last-child { text-align: right; padding-right: 8px; }
  tbody::before { content: ''; display: block; height: 5px; }
`;
const FileRow = styled.tr<{ $on?: boolean }>`
  ${(p) => p.$on && 'background: linear-gradient(to right, #cce8ff 598px, transparent 598px); td { box-shadow: inset 0 1px #99d1ff, inset 0 -1px #99d1ff; } td:last-child { box-shadow: none; background: linear-gradient(#99d1ff, #99d1ff) 0 0 / 76px 1px no-repeat, linear-gradient(#99d1ff, #99d1ff) 0 100% / 76px 1px no-repeat, linear-gradient(#99d1ff, #99d1ff) 76px 0 / 1px 100% no-repeat; } td:first-child { box-shadow: inset 0 1px #99d1ff, inset 0 -1px #99d1ff, inset 1px 0 #99d1ff; }'}
`;
const HScroll = styled.div`
  display: flex;
  height: 16px;
  background: #f0f0f0;
`;
const HThumb = styled.div`
  flex: 1;
  margin: 0 3px 0 1px;
  background: #cdcdcd;
`;
const StatusBar = styled.footer`
  display: flex;
  align-items: center;
  height: 23px;
  padding: 0 4px 0 14px;
  color: #1e395b;
  white-space: nowrap;
`;
const ViewButton = styled.button<{ $on?: boolean }>`
  width: 22px;
  height: 23px;
  display: flex;
  align-items: center;
  justify-content: center;
  border: 1px solid ${(p) => (p.$on ? '#26a0da' : 'transparent')};
  background: ${(p) => (p.$on ? '#cbe8f6' : 'none')};
`;

type TreeEntry = { text: string; icon: () => React.ReactElement; level: number; on?: boolean };
const tree: TreeEntry[] = [
  { text: 'Pictures', icon: PictureIcon, level: 2 },
  { text: 'Saved Games', icon: GamesIcon, level: 2 },
  { text: 'Searches', icon: SearchesIcon, level: 2 },
  { text: 'Videos', icon: VideoIcon, level: 2 },
  { text: 'This PC', icon: PcIcon, level: 1 },
  { text: '3D Objects', icon: CubeIcon, level: 2 },
  { text: 'Desktop', icon: DesktopIconSm, level: 2 },
  { text: 'Documents', icon: DocIcon, level: 2 },
  { text: 'Downloads', icon: DownIcon, level: 2 },
  { text: 'KFlauncher', icon: Folder, level: 3, on: true },
  { text: 'Music', icon: MusicIcon, level: 2 },
  { text: 'Pictures', icon: PictureIcon, level: 2 },
  { text: 'Videos', icon: VideoIcon, level: 2 },
  { text: 'Local Disk (C:)', icon: DiskIcon, level: 2 },
  { text: 'Libraries', icon: LibIcon, level: 1 },
  { text: 'Network', icon: NetIcon, level: 1 },
];

const files = [
  { name: 'jre', date: '5/9/2024 11:20 AM', type: 'File folder', size: '', icon: Folder, on: true },
  { name: 'PROPAMAT', date: '5/9/2024 11:21 AM', type: 'File folder', size: '', icon: Folder },
  { name: 'Templates', date: '5/9/2024 11:21 AM', type: 'File folder', size: '', icon: Folder },
  { name: 'CrystalDecisions.Shared.dll', date: '1/25/2023 2:52 PM', type: 'Application exten...', size: '952 KB', icon: DllIcon },
  { name: 'KFlauncher.exe', date: '7/4/2024 5:44 PM', type: 'Application', size: '819,200 KB', icon: ExeIcon },
];

const Explorer = () => (
  <ExplorerWindow aria-label="KFlauncher">
    <TitleBar>
      <QuickAccess>
        <Folder /><Divider /><PageCheck /><Folder />
        <Svg w={8} h={8}><path d="M0 1.500h8" stroke="#000" /><path d="M0 4h8L4 8z" fill="#000" /></Svg>
        <Divider />
      </QuickAccess>
      <ManageTab>Manage</ManageTab>
      <WindowTitle>KFlauncher</WindowTitle>
      <CaptionButton aria-label="Minimize"><MinGlyph /></CaptionButton>
      <CaptionButton aria-label="Maximize"><MaxGlyph /></CaptionButton>
      <CaptionButton aria-label="Close"><CloseGlyph /></CaptionButton>
    </TitleBar>
    <Tabs>
      <Tab $w={56} $kind="file">File</Tab>
      <Tab $w={58} $kind="active">Home</Tab>
      <Tab $w={58}>Share</Tab>
      <Tab $w={55}>View</Tab>
      <Tab $w={119} $kind="tool">Application Tools</Tab>
      <Spacer />
      <Row $gap={9}>
        <Chev d="up" c="#a5a5a5" />
        <Svg><circle cx="8" cy="8" r="8" fill="#0b62b4" /><text x="8" y="12" textAnchor="middle" fontFamily="Open Sans" fontWeight="700" fontSize="12" fill="#fff">?</text></Svg>
      </Row>
    </Tabs>
    <Ribbon>
      <Group $w={263}>
        <GroupBody>
          <BigButton $w={66} $off><BigIcon><PinIcon /></BigIcon><span>{'Pin to Quick\naccess'}</span></BigButton>
          <BigButton $w={44}><BigIcon><CopyIcon /></BigIcon><span>Copy</span></BigButton>
          <BigButton $w={40} $off><BigIcon><PasteIcon /></BigIcon><span>Paste</span></BigButton>
          <Stack $ml={4}>
            <SmallButton><CutIcon />Cut</SmallButton>
            <SmallButton><PathIcon />Copy path</SmallButton>
            <SmallButton $off><PasteShortcutIcon />Paste shortcut</SmallButton>
          </Stack>
        </GroupBody>
        <GroupName>Clipboard</GroupName>
      </Group>
      <Group $w={165}>
        <GroupBody $pad={8}>
          <Stack $row={29} $mt={6}>
            <SmallButton $gap={2}><MoveIcon />Move to <Tri /></SmallButton>
            <SmallButton $gap={2}><CopyToIcon />Copy to <Tri /></SmallButton>
          </Stack>
          <InnerLine />
          <Stack $row={29} $mt={6}>
            <SmallButton $gap={2}><DeleteIcon />Delete <Tri /></SmallButton>
            <SmallButton $gap={2}><RenameIcon />Rename</SmallButton>
          </Stack>
        </GroupBody>
        <GroupName>Organize</GroupName>
      </Group>
      <Group $w={83}>
        <GroupBody $pad={4}>
          <BigButton $w={42}><BigIcon><FolderTall /></BigIcon><span>{'New\nfolder'}</span></BigButton>
          <Stack $ml={3}>
            <SmallButton aria-label="New item" $gap={0}><NewItemIcon /><Tri /></SmallButton>
            <SmallButton aria-label="Easy access" $gap={0}><EasyIcon /><Tri /></SmallButton>
          </Stack>
        </GroupBody>
        <GroupName>New</GroupName>
      </Group>
      <Group $w={133}>
        <GroupBody $pad={4}>
          <BigButton $w={56}><BigIcon><PropertiesIcon /></BigIcon><span>Properties</span><Tri /></BigButton>
          <Stack $ml={4}>
            <SmallButton><ExeIcon />Open <Tri /></SmallButton>
            <SmallButton $off><EditIcon />Edit</SmallButton>
            <SmallButton><HistoryIcon />History</SmallButton>
          </Stack>
        </GroupBody>
        <GroupName>Open</GroupName>
      </Group>
      <Group $w={115}>
        <GroupBody $pad={7}>
          <Stack>
            <SmallButton><SelAll />Select all</SmallButton>
            <SmallButton><SelNone />Select none</SmallButton>
            <SmallButton><SelInv />Invert selection</SmallButton>
          </Stack>
        </GroupBody>
        <GroupName>Select</GroupName>
      </Group>
    </Ribbon>
    <NavBar>
      <NavButton $w={28} aria-label="Back"><Svg s={12}><path d="M12 6H1M6 1L1 6l5 5" stroke="#555" strokeWidth="1.500" /></Svg></NavButton>
      <NavButton $w={32} aria-label="Forward"><Svg s={12}><path d="M0 6h11M6 1l5 5-5 5" stroke="#cfcfcf" strokeWidth="1.500" /></Svg></NavButton>
      <NavButton $w={14} aria-label="Recent"><Chev s={8} c="#777" /></NavButton>
      <NavButton $w={28} aria-label="Up"><Svg s={12}><path d="M6 12V1M1 6l5-5 5 5" stroke="#555" strokeWidth="1.600" /></Svg></NavButton>
      <Address>
        <Folder />
        <Row><NavButton $w={14}><Chev d="right" s={8} /></NavButton><Crumb>This PC</Crumb></Row>
        <Row><NavButton $w={14}><Chev d="right" s={8} /></NavButton><Crumb>Downloads</Crumb></Row>
        <Row><NavButton $w={14}><Chev d="right" s={8} /></NavButton><Crumb>KFlauncher</Crumb></Row>
        <Spacer />
        <NavButton $w={14} aria-label="History"><Chev /></NavButton>
        <Refresh aria-label="Refresh"><Svg s={12}><path d="M9.500 3.500A4.500 4.500 0 1 1 4 2.200" stroke="#666" strokeWidth="1.500" /><path d="M6 1h4.500v4" stroke="#666" strokeWidth="1.500" /></Svg></Refresh>
      </Address>
      <SearchBox>
        <input placeholder="Search KFlauncher" aria-label="Search KFlauncher" />
        <Svg s={12}><circle cx="7.500" cy="4.500" r="3.500" stroke="#666" strokeWidth="1.500" /><path d="M5 7l-4.500 4.500" stroke="#666" strokeWidth="1.800" /></Svg>
      </SearchBox>
    </NavBar>
    <Body>
      <Tree>
        {tree.map(({ text, icon: Icon, level, on }, i) => (
          <TreeItem key={i} $level={level} $on={on}><Icon /><span>{text}</span></TreeItem>
        ))}
      </Tree>
      <VScroll>
        <ScrollBtn aria-label="Scroll up"><Chev d="up" /></ScrollBtn>
        <Track $before={152} $thumb={117} $after={84} />
        <ScrollBtn aria-label="Scroll down"><Chev /></ScrollBtn>
      </VScroll>
      <Content>
        <ListArea>
          <FileTable>
            <colgroup><col style={{ width: 258 }} /><col style={{ width: 144 }} /><col style={{ width: 120 }} /><col /></colgroup>
            <thead><tr><th>Name</th><th>Date modified</th><th>Type</th><th>Size</th></tr></thead>
            <tbody>
              {files.map(({ name, date, type, size, icon: Icon, on }) => (
                <FileRow key={name} $on={on}>
                  <td><Row $gap={4}><Icon />{name}</Row></td><td>{date}</td><td>{type}</td><td>{size}</td>
                </FileRow>
              ))}
            </tbody>
          </FileTable>
        </ListArea>
        <HScroll>
          <ScrollBtn aria-label="Scroll left"><Chev d="left" /></ScrollBtn>
          <HThumb />
          <ScrollBtn aria-label="Scroll right"><Chev d="right" /></ScrollBtn>
        </HScroll>
      </Content>
    </Body>
    <StatusBar>
      <Row $gap={21}><span>5 items</span><span>1 item selected</span></Row>
      <Spacer />
      <ViewButton $on aria-label="Details view">
        <Svg><path d="M1.500 1.500h3v3h-3zM1.500 6.500h3v3h-3zM1.500 11.500h3v3h-3z" fill="#fff" stroke="#9a7f78" /><path d="M6.500 3.500h4m1 0h4M6.500 8.500h4m1 0h4M6.500 12.500h4m1 0h4" stroke="#555" /></Svg>
      </ViewButton>
      <ViewButton aria-label="Large icons view"><Svg s={14}><Photo x={0} y={2} w={13} h={10} /></Svg></ViewButton>
    </StatusBar>
    <SortMark><Chev d="up" s={9} c="#8a8a8a" t={1.5} /></SortMark>
  </ExplorerWindow>
);

/* ---------- watermark ---------- */

const Watermark = styled.div`
  position: absolute;
  right: 49px;
  bottom: 48px;
  display: flex;
  align-items: center;
  gap: 6px;
  font: 400 32px/32px Roboto, "Liberation Sans", sans-serif;
  color: rgba(255, 255, 255, 0.7);
  text-shadow: 0 0 2px rgba(110, 110, 120, 0.7);
  pointer-events: none;
`;

/* ---------- taskbar ---------- */

const Taskbar = styled.footer`
  position: relative;
  display: flex;
  height: 40px;
  background: linear-gradient(to right, #001a24, #00141f 50%, #00061a);
  color: #fff;
`;
const TaskButton = styled.button<{ $w?: number; $on?: boolean; $run?: boolean }>`
  width: ${(p) => p.$w ?? 49}px;
  height: 40px;
  display: flex;
  align-items: center;
  justify-content: center;
  background: ${(p) => (p.$on ? '#33454e' : 'none')};
  ${(p) => (p.$on || p.$run) && 'border: solid #76b0e8; border-width: 0 0 2px; padding-top: 2px;'}
  ${(p) => p.$run && 'width: 40px; margin: 0 5px;'}
`;
const StartSearch = styled.label`
  width: 288px;
  display: flex;
  align-items: center;
  gap: 10px;
  padding: 0 10px 0 12px;
  background: #f2f2f2;
  border: 1px solid #c8c8c8;
  color: #222;
  font-size: 14px;
  input { flex: 1; min-width: 0; padding-top: 2px; outline: 0; }
  input::placeholder { color: #2b2b2b; opacity: 1; }
`;
const TrayButton = styled.button`
  width: 24px;
  display: flex;
  align-items: center;
  justify-content: center;
`;
const Clock = styled.time`
  width: 64px;
  padding-top: 2px;
  text-align: center;
  line-height: 18px;
`;
const ShowDesktop = styled.button`
  width: 5px;
  margin-left: 8px;
  border-left: 1px solid #5a6270;
`;

const TaskbarView = () => (
  <Taskbar>
    <TaskButton $w={48} aria-label="Start"><Svg><path d="M0 2.300l6.500-.9v6.200H0zM7.300 1.300L16 0v7.600H7.300zM0 8.400h6.500v6.200L0 13.700zM7.300 8.400H16V16l-8.700-1.300z" fill="#fff" /></Svg></TaskButton>
    <StartSearch>
      <Svg s={16}><circle cx="10.500" cy="5.500" r="5" stroke="#222" strokeWidth="1.300" /><path d="M7 9L.5 15.500" stroke="#222" strokeWidth="1.300" /></Svg>
      <input placeholder="Type here to search" aria-label="Type here to search" />
      <Svg w={52} h={34}>
        <ellipse cx="14" cy="12" rx="15" ry="10" transform="rotate(35 14 12)" fill="#dff3f4" stroke="#4fb9c4" strokeWidth="2.200" />
        <path d="M4 8l18 13M9 4l17 13M4 14l14-12M9 19l15-14M16 21l11-10" stroke="#8a7ab0" strokeWidth=".8" />
        <path d="M26 20l10 4M29 15l7 8" stroke="#4fb9c4" strokeWidth="1.800" /><path d="M37 24l13 7" stroke="#4a3048" strokeWidth="5" strokeLinecap="round" />
        <circle cx="15" cy="22" r="12" fill="#b4d412" /><path d="M4 18c6-1 12 5 11 16M15 10c1 7 5 11 12 11" stroke="#f4fbd0" strokeWidth="1.800" />
      </Svg>
    </StartSearch>
    <TaskButton $w={48} aria-label="Task view"><Svg w={17} h={16}><path d="M1 0v2.500h10V0M1 16v-2.500h10V16M.5 4.500h11v7H.5zM15 0v3m0 3v10" stroke="#fff" /><rect x="13.500" y="4" width="3" height="3" fill="#fff" /></Svg></TaskButton>
    <TaskButton $w={52} aria-label="Microsoft Edge"><Svg s={24} vb="0 0 256 256"><EdgePaths /></Svg></TaskButton>
    <TaskButton $w={48} $on aria-label="File Explorer"><Svg w={22} h={18}><path d="M0 0h9l2 2h11v15H0z" fill="#fbd36b" /><path d="M0 0h9l2 2H0z" fill="#e09d2a" /><path d="M0 4h22v2H0z" fill="#ffe39a" /><path d="M5 10h13v8h-4v-4H9v4H5z" fill="#3f8ac4" /></Svg></TaskButton>
    <TaskButton aria-label="Firefox"><Svg s={24} vb="0 0 48 48"><FoxPaths /></Svg></TaskButton>
    <TaskButton $run aria-label="Task Manager"><Svg w={24} h={22}><path d="M1 2l18-2 4 1-1 14-10 2-11-1z" fill="#b9bec2" /><path d="M5 3l17-1-1 11-15 1z" fill="#f4f8fb" stroke="#8b9399" strokeWidth=".7" /><path d="M7 11l3-3 1 2 2-6 2 7 2-4 2 3" stroke="#2f7fc2" /><path d="M9 19l6-3 7 2-5 4z" fill="#d0d4d7" /></Svg></TaskButton>
    <Spacer />
    <TrayButton aria-label="Show hidden icons"><Svg w={12} h={8}><path d="M1 7l5-5 5 5" stroke="#fff" strokeWidth="1.300" /></Svg></TrayButton>
    <TrayButton aria-label="Meet Now"><Svg w={12} h={16}><rect x="1" y="4.500" width="7" height="7" rx="1" stroke="#fff" strokeWidth="1.200" /><path d="M8 8l3-2v4zM2 1.500c2-1 5-1 7 0M2 14.500c2 1 5 1 7 0" stroke="#fff" /></Svg></TrayButton>
    <TrayButton aria-label="Network"><Svg><path d="M6 3.500h9.500v7H4.500V7M9.500 10.500v3M6 13.500h8M3.500 6v7.500" stroke="#fff" /><rect x=".5" y="1.500" width="4" height="4" stroke="#fff" /></Svg></TrayButton>
    <TrayButton aria-label="Volume"><Svg><path d="M.5 5.500h2l4-3.500v12l-4-3.500h-2z" stroke="#fff" /><path d="M8.500 6c1 1 1 3 0 4M10.500 4c2 2 2 6 0 8M12.500 2.500c3 3 3 8 0 11" stroke="#fff" /></Svg></TrayButton>
    <Clock>7:27 PM<br />7/5/2024</Clock>
    <TaskButton $w={40} aria-label="Notifications"><Svg w={16} h={16}><path d="M.5.500h15v11H11L8 15l-3-3.500H.5z" stroke="#fff" /></Svg></TaskButton>
    <ShowDesktop aria-label="Show desktop" />
  </Taskbar>
);

export default function App() {
  return (
    <Screen>
      <GlobalStyle />
      <Gradients />
      <Desktop>
        <IconGrid>
          {launchers.map(([icon, label]) => (
            <Launcher key={label}><Svg s={48}>{deskIcons[icon]}</Svg><span>{label}</span></Launcher>
          ))}
        </IconGrid>
        <TaskManager />
        <Explorer />
      </Desktop>
      <TaskbarView />
      <Watermark>
        <span>ANY</span>
        <Svg w={60} h={62}>
          <path d="M3 6v50l8 4L56 34 10 2z" stroke="rgba(255,255,255,.6)" strokeWidth="3" fill="rgba(215,215,220,.35)" />
          <path d="M4 5l8 4v50M12 9l42 25M18 20v28l26-14z" stroke="rgba(255,255,255,.7)" strokeWidth="3" />
        </Svg>
        <span>RUN</span>
      </Watermark>
    </Screen>
  );
}
